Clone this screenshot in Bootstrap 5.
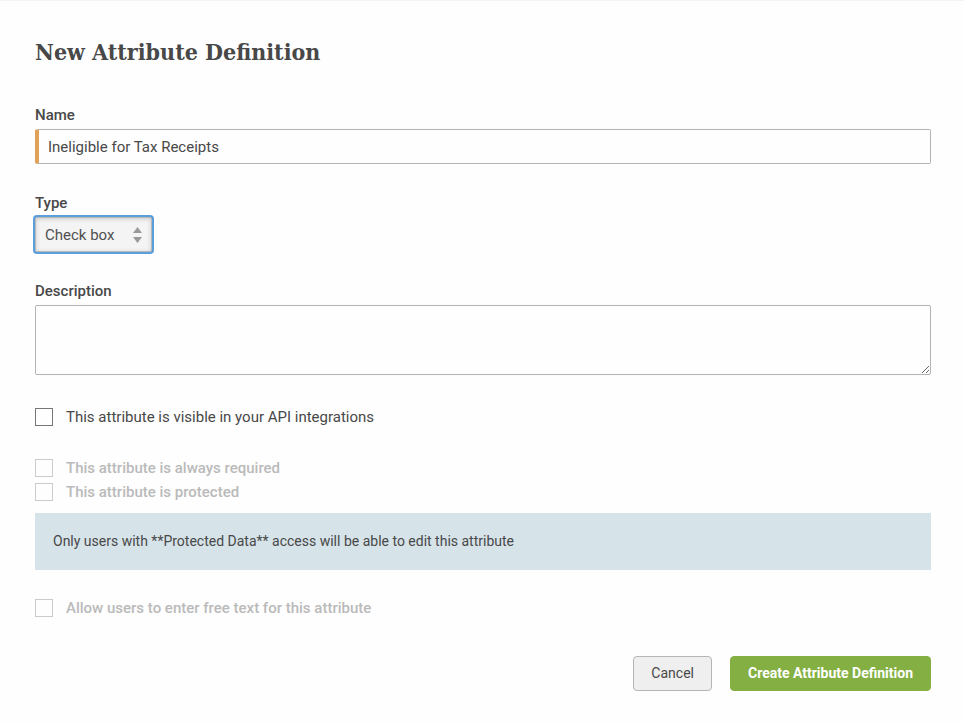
<!DOCTYPE html>
<html lang="en">
<head>
<meta charset="utf-8">
<meta name="viewport" content="width=device-width, initial-scale=1">
<title>New Attribute Definition</title>
<link href="https://cdn.jsdelivr.net/npm/bootstrap@5.3.0/dist/css/bootstrap.min.css" rel="stylesheet">
<style>
body { font-family: Roboto, sans-serif; font-size: 15px; line-height: 20px; color: #484848; background: #fefefe; }
.attr-form { border-top: 1px solid #f3f3f3; padding: 35px 33px 32px 35px; }
.page-title { font-family: "Roboto Slab", "DejaVu Serif Condensed", "DejaVu Serif", serif; font-size: 23px; line-height: 32px; font-weight: 700; margin-bottom: 37px; }
.form-label { font-weight: 500; line-height: 20px; margin-bottom: 4px; }
.field { margin-bottom: 29px; }
.form-control { font-size: 15px; line-height: 20px; color: #484848; border: 1px solid #b3b3b3; border-radius: 2px; background: #fefefe; padding: 7px 12px 6px; }
.form-control.required-field { border-left: 4px solid #dfa258; padding-left: 9px; }
textarea.form-control { height: 70px; display: block; }
.type-select { width: 117px; height: 35px; padding: 7px 28px 6px 9px; font-size: 15px; line-height: 20px; color: #505050; border: 1px solid #b9b9b9; border-radius: 2px; background: #f4f4f4 url("data:image/svg+xml,%3Csvg xmlns='http://www.w3.org/2000/svg' width='9' height='16'%3E%3Cpath d='M0 6L4.500 0L9 6zM0 10L4.500 16L9 10z' fill='%23999'/%3E%3C/svg%3E") no-repeat right 9px center; background-size: 9px 16px; box-shadow: 0 0 0 2px #5a9edb, inset 0 1px 4px #c8c8c8; }
.type-select:focus { border-color: #b9b9b9; box-shadow: 0 0 0 2px #5a9edb, inset 0 1px 4px #c8c8c8; }
.options { padding-top: 1px; }
.option { display: flex; align-items: center; gap: 13px; min-height: 24px; padding: 0; margin: 0; }
.option-group { margin-top: 27px; }
.option .form-check-input { float: none; flex: none; width: 18px; height: 18px; margin: 0; border: 1px solid #767676; border-radius: 0; background-color: #fefefe; }
.option .form-check-input:disabled { border-color: #cbcbcb; opacity: 1; }
.option .form-check-input:disabled ~ .form-check-label { color: #bababa; opacity: 1; font-weight: 500; }
.notice { background: #d6e3e9; font-size: 14px; line-height: 21px; padding: 18px; margin: 9px 0 26px; }
.actions { gap: 18px; margin-top: 36px; }
.actions .btn { font-size: 14px; line-height: 21px; border-radius: 4px; padding: 6px 17px; }
.btn-plain { background: #efefef; border: 1px solid #b5b5b5; color: #484848; }
.btn-create { background: #84b043; border: 1px solid #84b043; color: #fff; font-weight: 700; }
</style>
</head>
<body>
<main>
<form class="attr-form">
  <h1 class="page-title">New Attribute Definition</h1>
  <div class="field">
    <label class="form-label d-block" for="name">Name</label>
    <input class="form-control required-field" id="name" type="text" value="Ineligible for Tax Receipts">
  </div>
  <div class="field">
    <label class="form-label d-block" for="type">Type</label>
    <select class="form-select type-select" id="type"><option>Check box</option></select>
  </div>
  <div class="field">
    <label class="form-label d-block" for="description">Description</label>
    <textarea class="form-control" id="description"></textarea>
  </div>
  <div class="options">
    <div class="form-check option">
      <input class="form-check-input" type="checkbox" id="api">
      <label class="form-check-label" for="api">This attribute is visible in your API integrations</label>
    </div>
    <div class="option-group">
      <div class="form-check option">
        <input class="form-check-input" type="checkbox" id="required" disabled>
        <label class="form-check-label" for="required">This attribute is always required</label>
      </div>
      <div class="form-check option">
        <input class="form-check-input" type="checkbox" id="protected" disabled>
        <label class="form-check-label" for="protected">This attribute is protected</label>
      </div>
      <div class="notice">Only users with **Protected Data** access will be able to edit this attribute</div>
    </div>
    <div class="form-check option">
      <input class="form-check-input" type="checkbox" id="freetext" disabled>
      <label class="form-check-label" for="freetext">Allow users to enter free text for this attribute</label>
    </div>
  </div>
  <div class="actions d-flex justify-content-end">
    <button class="btn btn-plain" type="button">Cancel</button>
    <button class="btn btn-create" type="submit">Create Attribute Definition</button>
  </div>
</form>
</main>
<script src="https://cdn.jsdelivr.net/npm/bootstrap@5.3.0/dist/js/bootstrap.bundle.min.js"></script>
</body>
</html>
